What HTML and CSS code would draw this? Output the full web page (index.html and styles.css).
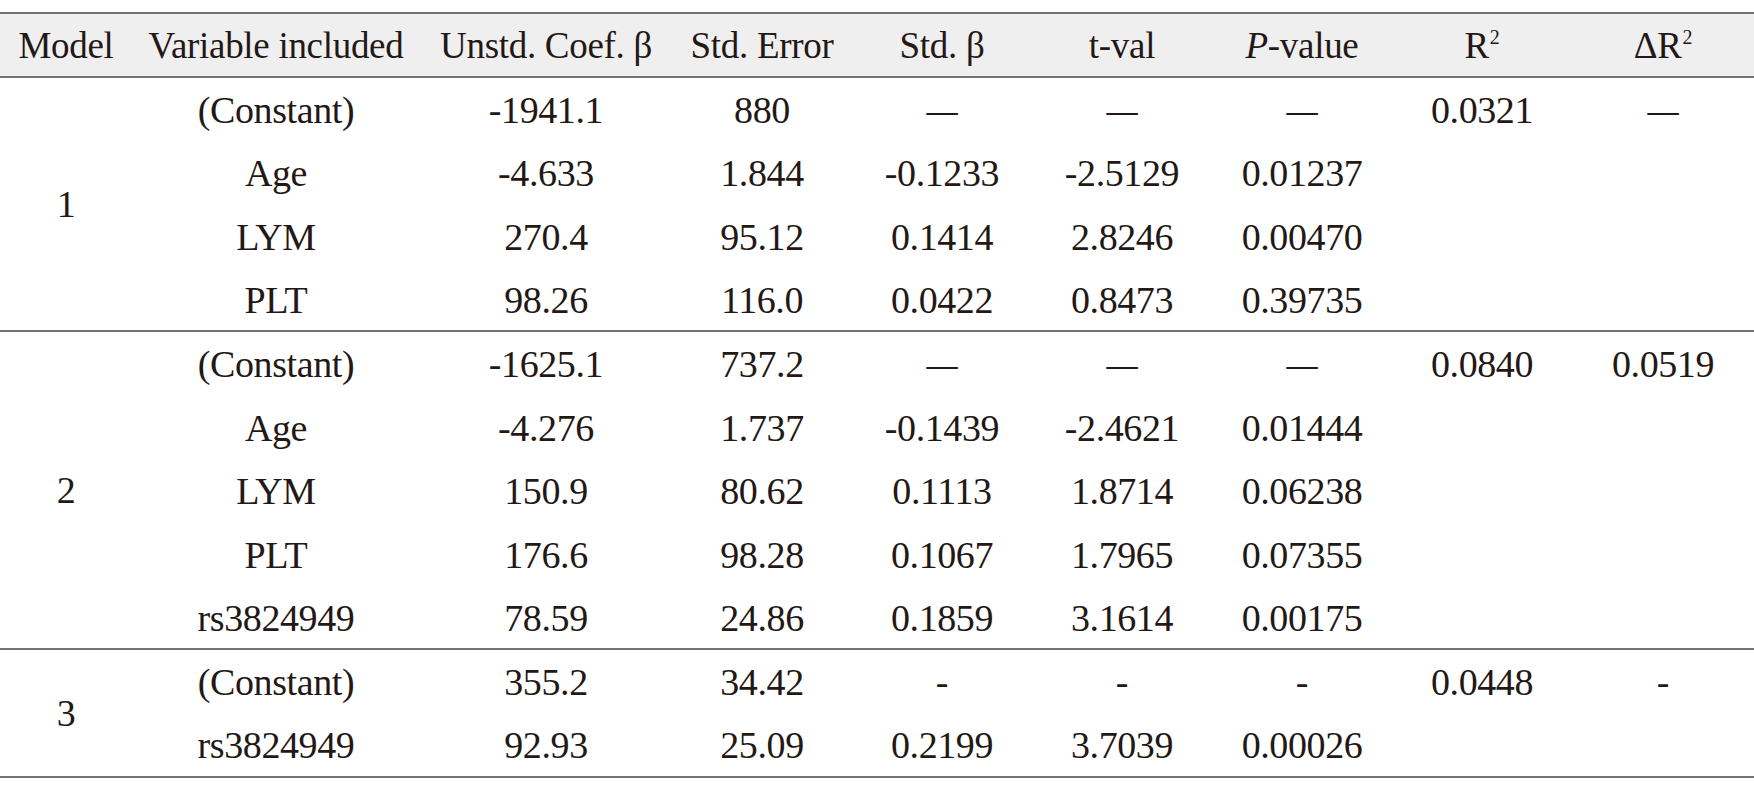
FILE: index.html
```html
<!DOCTYPE html>
<html lang="en">
<head>
<meta charset="utf-8">
<title>Regression models</title>
<link rel="stylesheet" href="styles.css">
</head>
<body>
<table class="reg">
  <colgroup>
    <col class="c-model">
    <col class="c-var">
    <col class="c-unstd">
    <col class="c-num">
    <col class="c-num">
    <col class="c-num">
    <col class="c-num">
    <col class="c-num">
    <col class="c-last">
  </colgroup>
  <thead>
    <tr>
      <th>Model</th>
      <th>Variable included</th>
      <th>Unstd. Coef. β</th>
      <th>Std. Error</th>
      <th>Std. β</th>
      <th>t-val</th>
      <th><i>P</i>-value</th>
      <th>R<sup>2</sup></th>
      <th>ΔR<sup>2</sup></th>
    </tr>
  </thead>
  <tbody>
    <tr>
      <td class="model" rowspan="4">1</td>
      <td>(Constant)</td><td>-1941.1</td><td>880</td><td><span class="dash">—</span></td><td><span class="dash">—</span></td><td><span class="dash">—</span></td><td>0.0321</td><td><span class="dash">—</span></td>
    </tr>
    <tr><td>Age</td><td>-4.633</td><td>1.844</td><td>-0.1233</td><td>-2.5129</td><td>0.01237</td><td></td><td></td></tr>
    <tr><td>LYM</td><td>270.4</td><td>95.12</td><td>0.1414</td><td>2.8246</td><td>0.00470</td><td></td><td></td></tr>
    <tr class="end"><td>PLT</td><td>98.26</td><td>116.0</td><td>0.0422</td><td>0.8473</td><td>0.39735</td><td></td><td></td></tr>
  </tbody>
  <tbody>
    <tr>
      <td class="model" rowspan="5">2</td>
      <td>(Constant)</td><td>-1625.1</td><td>737.2</td><td><span class="dash">—</span></td><td><span class="dash">—</span></td><td><span class="dash">—</span></td><td>0.0840</td><td>0.0519</td>
    </tr>
    <tr><td>Age</td><td>-4.276</td><td>1.737</td><td>-0.1439</td><td>-2.4621</td><td>0.01444</td><td></td><td></td></tr>
    <tr><td>LYM</td><td>150.9</td><td>80.62</td><td>0.1113</td><td>1.8714</td><td>0.06238</td><td></td><td></td></tr>
    <tr><td>PLT</td><td>176.6</td><td>98.28</td><td>0.1067</td><td>1.7965</td><td>0.07355</td><td></td><td></td></tr>
    <tr class="end"><td>rs3824949</td><td>78.59</td><td>24.86</td><td>0.1859</td><td>3.1614</td><td>0.00175</td><td></td><td></td></tr>
  </tbody>
  <tbody>
    <tr>
      <td class="model" rowspan="2">3</td>
      <td>(Constant)</td><td>355.2</td><td>34.42</td><td>-</td><td>-</td><td>-</td><td>0.0448</td><td>-</td>
    </tr>
    <tr class="end"><td>rs3824949</td><td>92.93</td><td>25.09</td><td>0.2199</td><td>3.7039</td><td>0.00026</td><td></td><td></td></tr>
  </tbody>
</table>
</body>
</html>
```

FILE: styles.css
```css
html, body {
  margin: 0;
  padding: 0;
  background: #ffffff;
}

body {
  padding-top: 12px;
  font-family: "Liberation Serif", "Times New Roman", serif;
  color: #231815;
}

.reg {
  width: 1754px;
  table-layout: fixed;
  border-collapse: separate;
  border-spacing: 0;
}

.c-model { width: 132px; }
.c-var { width: 288px; }
.c-unstd { width: 252px; }
.c-num { width: 180px; }
.c-last { width: 182px; }

.reg th,
.reg td {
  padding: 0;
  text-align: center;
  vertical-align: middle;
  white-space: nowrap;
}

.reg thead tr {
  height: 66px;
}

.reg th {
  font-weight: normal;
  font-size: 37px;
  letter-spacing: -0.3px;
  background: #efefef;
  border-top: 2px solid #727171;
  border-bottom: 2px solid #727171;
}

.reg th i {
  font-style: italic;
}

.reg sup {
  font-size: 20px;
  line-height: 0;
  vertical-align: 14px;
  margin-left: 1px;
}

.reg tbody tr {
  height: 63.6px;
}

.reg td {
  font-size: 38px;
  letter-spacing: -0.4px;
  line-height: 1;
}

.reg .dash {
  display: inline-block;
  transform: scaleX(0.82);
}

.reg tr.end td,
.reg td.model {
  border-bottom: 2px solid #727171;
}
```
